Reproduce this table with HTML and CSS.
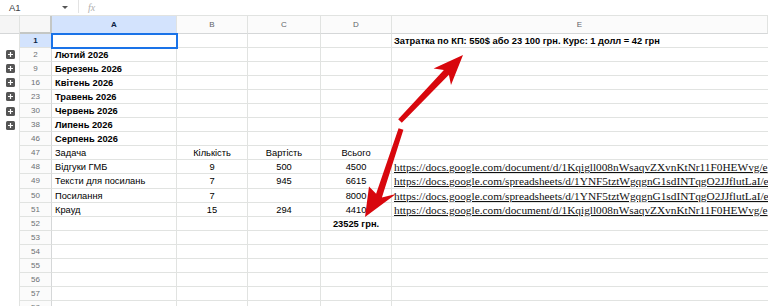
FILE: index.html
```html
<!DOCTYPE html>
<html lang="uk">
<head>
<meta charset="utf-8">
<title>Sheet</title>
<link rel="stylesheet" href="styles.css">
</head>
<body>
<div class="fbar">
  <span class="namebox">A1</span>
  <span class="caret"></span>
  <span class="sep"></span>
  <span class="fx">fx</span>
</div>
<div class="sheet">
  <!-- header -->
  <div class="g gh"></div><div class="corner"></div><div class="ch hl">A</div><div class="ch">B</div><div class="ch">C</div><div class="ch">D</div><div class="ch">E</div>
  <!-- 1 -->
  <div class="g"></div><div class="rh hl">1</div><div class="c sel"></div><div class="c"></div><div class="c"></div><div class="c"></div><div class="c e b">Затратка по КП: 550$ або 23 100 грн. Курс: 1 долл = 42 грн</div>
  <!-- 2 -->
  <div class="g"><svg class="plus" width="9" height="9" viewBox="0 0 9 9"><rect width="9" height="9" rx="1.5" fill="#555"/><path d="M4.5 2v5M2 4.5h5" stroke="#fff" stroke-width="1.2"/></svg></div><div class="rh">2</div><div class="c b">Лютий 2026</div><div class="c"></div><div class="c"></div><div class="c"></div><div class="c e"></div>
  <!-- 9 -->
  <div class="g"><svg class="plus" width="9" height="9" viewBox="0 0 9 9"><rect width="9" height="9" rx="1.5" fill="#555"/><path d="M4.5 2v5M2 4.5h5" stroke="#fff" stroke-width="1.2"/></svg></div><div class="rh">9</div><div class="c b">Березень 2026</div><div class="c"></div><div class="c"></div><div class="c"></div><div class="c e"></div>
  <!-- 16 -->
  <div class="g"><svg class="plus" width="9" height="9" viewBox="0 0 9 9"><rect width="9" height="9" rx="1.5" fill="#555"/><path d="M4.5 2v5M2 4.5h5" stroke="#fff" stroke-width="1.2"/></svg></div><div class="rh">16</div><div class="c b">Квітень 2026</div><div class="c"></div><div class="c"></div><div class="c"></div><div class="c e"></div>
  <!-- 23 -->
  <div class="g"><svg class="plus" width="9" height="9" viewBox="0 0 9 9"><rect width="9" height="9" rx="1.5" fill="#555"/><path d="M4.5 2v5M2 4.5h5" stroke="#fff" stroke-width="1.2"/></svg></div><div class="rh">23</div><div class="c b">Травень 2026</div><div class="c"></div><div class="c"></div><div class="c"></div><div class="c e"></div>
  <!-- 30 -->
  <div class="g"><svg class="plus" width="9" height="9" viewBox="0 0 9 9"><rect width="9" height="9" rx="1.5" fill="#555"/><path d="M4.5 2v5M2 4.5h5" stroke="#fff" stroke-width="1.2"/></svg></div><div class="rh">30</div><div class="c b">Червень 2026</div><div class="c"></div><div class="c"></div><div class="c"></div><div class="c e"></div>
  <!-- 38 -->
  <div class="g"><svg class="plus" width="9" height="9" viewBox="0 0 9 9"><rect width="9" height="9" rx="1.5" fill="#555"/><path d="M4.5 2v5M2 4.5h5" stroke="#fff" stroke-width="1.2"/></svg></div><div class="rh">38</div><div class="c b">Липень 2026</div><div class="c"></div><div class="c"></div><div class="c"></div><div class="c e"></div>
  <!-- 46 -->
  <div class="g"></div><div class="rh">46</div><div class="c b">Серпень 2026</div><div class="c"></div><div class="c"></div><div class="c"></div><div class="c e"></div>
  <!-- 47 -->
  <div class="g"></div><div class="rh">47</div><div class="c">Задача</div><div class="c n">Кількість</div><div class="c n">Вартість</div><div class="c n">Всього</div><div class="c e"></div>
  <!-- 48 -->
  <div class="g"></div><div class="rh">48</div><div class="c">Відгуки ГМБ</div><div class="c n">9</div><div class="c n">500</div><div class="c n">4500</div><div class="c e"><span class="lk">https://docs.google.com/document/d/1Kqigll008nWsaqvZXvnKtNr11F0HEWvg/e</span></div>
  <!-- 49 -->
  <div class="g"></div><div class="rh">49</div><div class="c">Тексти для посилань</div><div class="c n">7</div><div class="c n">945</div><div class="c n">6615</div><div class="c e"><span class="lk">https://docs.google.com/spreadsheets/d/1YNF5tztWgqgnG1sdINTqgO2JJflutLaI/e</span></div>
  <!-- 50 -->
  <div class="g"></div><div class="rh">50</div><div class="c">Посилання</div><div class="c n">7</div><div class="c n"></div><div class="c n">8000</div><div class="c e"><span class="lk">https://docs.google.com/spreadsheets/d/1YNF5tztWgqgnG1sdINTqgO2JJflutLaI/e</span></div>
  <!-- 51 -->
  <div class="g"></div><div class="rh">51</div><div class="c">Крауд</div><div class="c n">15</div><div class="c n">294</div><div class="c n">4410</div><div class="c e"><span class="lk">https://docs.google.com/document/d/1Kqigll008nWsaqvZXvnKtNr11F0HEWvg/e</span></div>
  <!-- 52 -->
  <div class="g"></div><div class="rh">52</div><div class="c"></div><div class="c"></div><div class="c"></div><div class="c n b">23525 грн.</div><div class="c e"></div>
  <!-- 53-58 -->
  <div class="g"></div><div class="rh">53</div><div class="c"></div><div class="c"></div><div class="c"></div><div class="c"></div><div class="c e"></div>
  <div class="g"></div><div class="rh">54</div><div class="c"></div><div class="c"></div><div class="c"></div><div class="c"></div><div class="c e"></div>
  <div class="g"></div><div class="rh">55</div><div class="c"></div><div class="c"></div><div class="c"></div><div class="c"></div><div class="c e"></div>
  <div class="g"></div><div class="rh">56</div><div class="c"></div><div class="c"></div><div class="c"></div><div class="c"></div><div class="c e"></div>
  <div class="g"></div><div class="rh">57</div><div class="c"></div><div class="c"></div><div class="c"></div><div class="c"></div><div class="c e"></div>
  <div class="g"></div><div class="rh">58</div><div class="c"></div><div class="c"></div><div class="c"></div><div class="c"></div><div class="c e"></div>
</div>
<svg class="arrows" width="768" height="306" viewBox="0 0 768 306">
  <polygon fill="#d8070d" points="401.8,122.7 448.9,74.8 451,85 463,55 433.6,68.4 443.9,70 398.2,119.3"/>
  <polygon fill="#d8070d" points="398.6,128.2 376.1,193.7 369,186.5 365,217 396,194 381.9,197.5 403.4,129.8"/>
</svg>
</body>
</html>
```
FILE: styles.css
```css
html, body {
  margin: 0;
  padding: 0;
}
body {
  width: 768px;
  height: 306px;
  overflow: hidden;
  position: relative;
  background: #fff;
  color: #000;
  font-family: "Liberation Sans", Arial, sans-serif;
}
.fbar {
  height: 16px;
  box-sizing: border-box;
  border-bottom: 1px solid #e1e3e1;
  display: flex;
  align-items: center;
  font-size: 9.5px;
  color: #3c4043;
}
.namebox {
  width: 53px;
  padding-left: 9px;
}
.caret {
  width: 0;
  height: 0;
  border-left: 3px solid transparent;
  border-right: 3px solid transparent;
  border-top: 3px solid #555;
}
.sep {
  width: 1px;
  height: 13px;
  margin: 0 9px 0 10px;
  background: #e3e3e3;
  align-self: flex-start;
}
.fx {
  font-family: "Liberation Serif", serif;
  font-style: italic;
  font-size: 10px;
  color: #b0b0b0;
}
.sheet {
  display: grid;
  grid-template-columns: 20px 32px 125px 71px 73px 71px 1fr;
  grid-template-rows: 17.5px;
  grid-auto-rows: 14.1px;
}
.sheet > div {
  box-sizing: border-box;
  white-space: nowrap;
  min-width: 0;
}
.g {
  border-right: 1px solid #e1e3e1;
  display: flex;
  align-items: center;
  padding-left: 6px;
}
.gh {
  background: #f5f5f5;
  border-bottom: 1px solid #d5d7d8;
}
.corner {
  background: #f7f7f7;
  border-right: 2px solid #c4c7c5;
  border-bottom: 2px solid #c4c7c5;
}
.ch {
  background: #fbfbfb;
  border-right: 1px solid #e1e3e1;
  border-bottom: 1px solid #d5d7d8;
  text-align: center;
  font-size: 8px;
  line-height: 17px;
  color: #5f6368;
}
.rh {
  background: #fbfbfb;
  border-right: 1px solid #d5d7d8;
  border-bottom: 1px solid #e1e3e1;
  text-align: center;
  font-size: 8px;
  line-height: 14px;
  color: #6b6f73;
}
.hl {
  background: #d3e3fd;
  color: #0b1f44;
  font-weight: bold;
}
.c {
  border-right: 1px solid #e1e3e1;
  border-bottom: 1px solid #e1e3e1;
  font-size: 9.3px;
  line-height: 13px;
  padding: 1px 3px 0;
}
.c.e {
  border-right: none;
  padding-left: 2px;
  overflow: hidden;
}
.b {
  font-weight: bold;
}
.n {
  text-align: center;
}
.sel {
  outline: 2px solid #1a73e8;
  outline-offset: -1px;
  position: relative;
  z-index: 1;
}
.lk {
  font-family: "Liberation Serif", "Times New Roman", serif;
  font-size: 11.3px;
  line-height: 13px;
  text-decoration: underline;
  color: #111;
}
.plus {
  display: block;
}
.arrows {
  position: absolute;
  left: 0;
  top: 0;
  pointer-events: none;
}
```
